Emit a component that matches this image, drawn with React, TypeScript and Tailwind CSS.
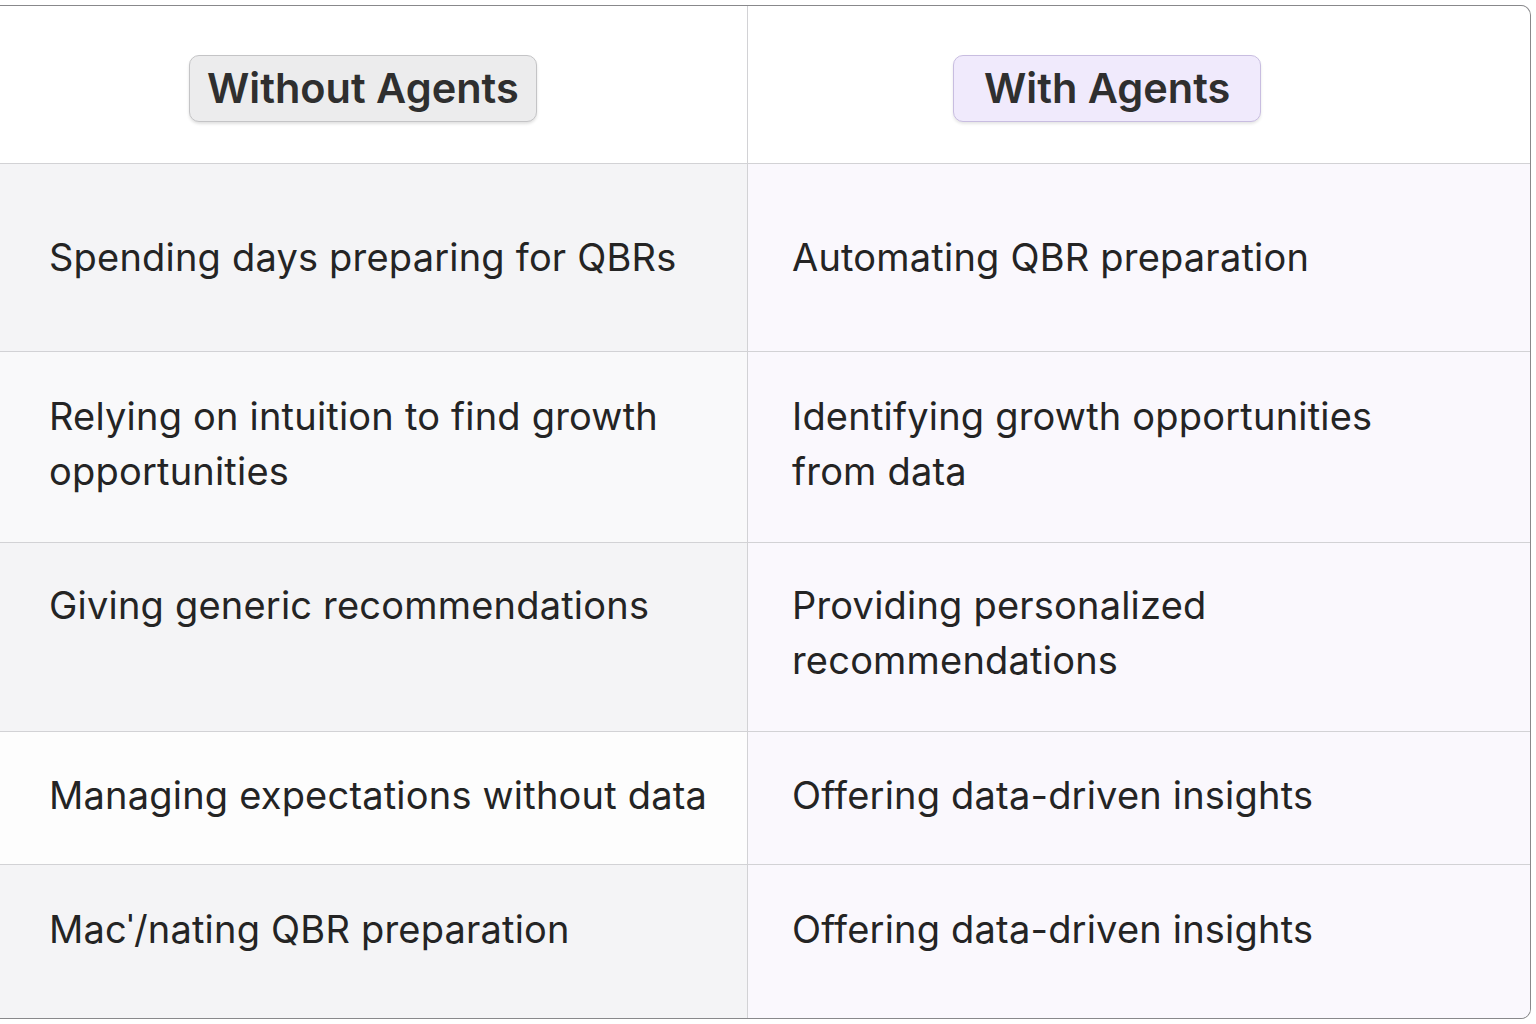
const ROWS = [
  { left: 'Spending days preparing for QBRs', right: 'Automating QBR preparation', h: 'h-[188px]', leftBg: 'bg-[#f4f4f6]', extra: '' },
  { left: 'Relying on intuition to find growth opportunities', right: 'Identifying growth opportunities from data', h: 'h-[191px]', leftBg: 'bg-[#f9f9fa]', extra: 'pb-[6px]' },
  { left: 'Giving generic recommendations', right: 'Providing personalized recommendations', h: 'h-[189px]', leftBg: 'bg-[#f4f4f6]', extra: 'items-start pt-[35px]' },
  { left: 'Managing expectations without data', right: 'Offering data-driven insights', h: 'h-[133px]', leftBg: 'bg-[#fdfdfd]', extra: 'pb-[6px]' },
  { left: 'Mac\u02C8/nating QBR preparation', right: 'Offering data-driven insights', h: 'h-[153px]', leftBg: 'bg-[#f4f4f6]', extra: 'pb-[24px]' },
];

export default function App() {
  return (
    <div className="min-h-screen bg-white pt-[5px]" style={{ fontFamily: 'Inter, "Noto Sans", sans-serif' }}>
      <div className="w-[1531px] overflow-hidden rounded-r-[10px] border-y-[1.5px] border-r-[1.5px] border-[#88888b] bg-white text-[#242424]">
        {/* header */}
        <div className="grid h-[158px] grid-cols-[748px_1fr] border-b border-[#d2d2d5]">
          <div className="flex items-center border-r border-[#d2d2d5] pt-[8px] pl-[189px]">
            <span className="rounded-[10px] border border-[#c4c4c6] bg-[#ececed] px-[17px] py-[8px] text-[41.5px] leading-[49px] font-semibold text-[#2f2f2f] shadow-[0_2px_3px_rgba(0,0,0,0.12)]">
              Without Agents
            </span>
          </div>
          <div className="flex items-center pt-[8px] pl-[205px]">
            <span className="rounded-[10px] border border-[#c8bde0] bg-[#f0eafc] px-[30px] py-[8px] text-[41.5px] leading-[49px] font-semibold text-[#2f2f2f] shadow-[0_2px_3px_rgba(0,0,0,0.1)]">
              With Agents
            </span>
          </div>
        </div>

        {ROWS.map((row, i) => (
          <div
            key={i}
            className={`grid grid-cols-[748px_1fr] ${row.h} ${i < ROWS.length - 1 ? 'border-b border-[#d2d2d5]' : ''}`}
          >
            <div className={`flex items-center border-r border-[#d2d2d5] pl-[49px] pr-[30px] ${row.leftBg} ${row.extra}`}>
              <p className="text-[38px] leading-[55px] tracking-[0.2px]">{row.left}</p>
            </div>
            <div className={`flex items-center bg-[#faf8fd] pl-[44px] pr-[100px] ${row.extra}`}>
              <p className="text-[38px] leading-[55px] tracking-[0.2px]">{row.right}</p>
            </div>
          </div>
        ))}
      </div>
    </div>
  );
}
